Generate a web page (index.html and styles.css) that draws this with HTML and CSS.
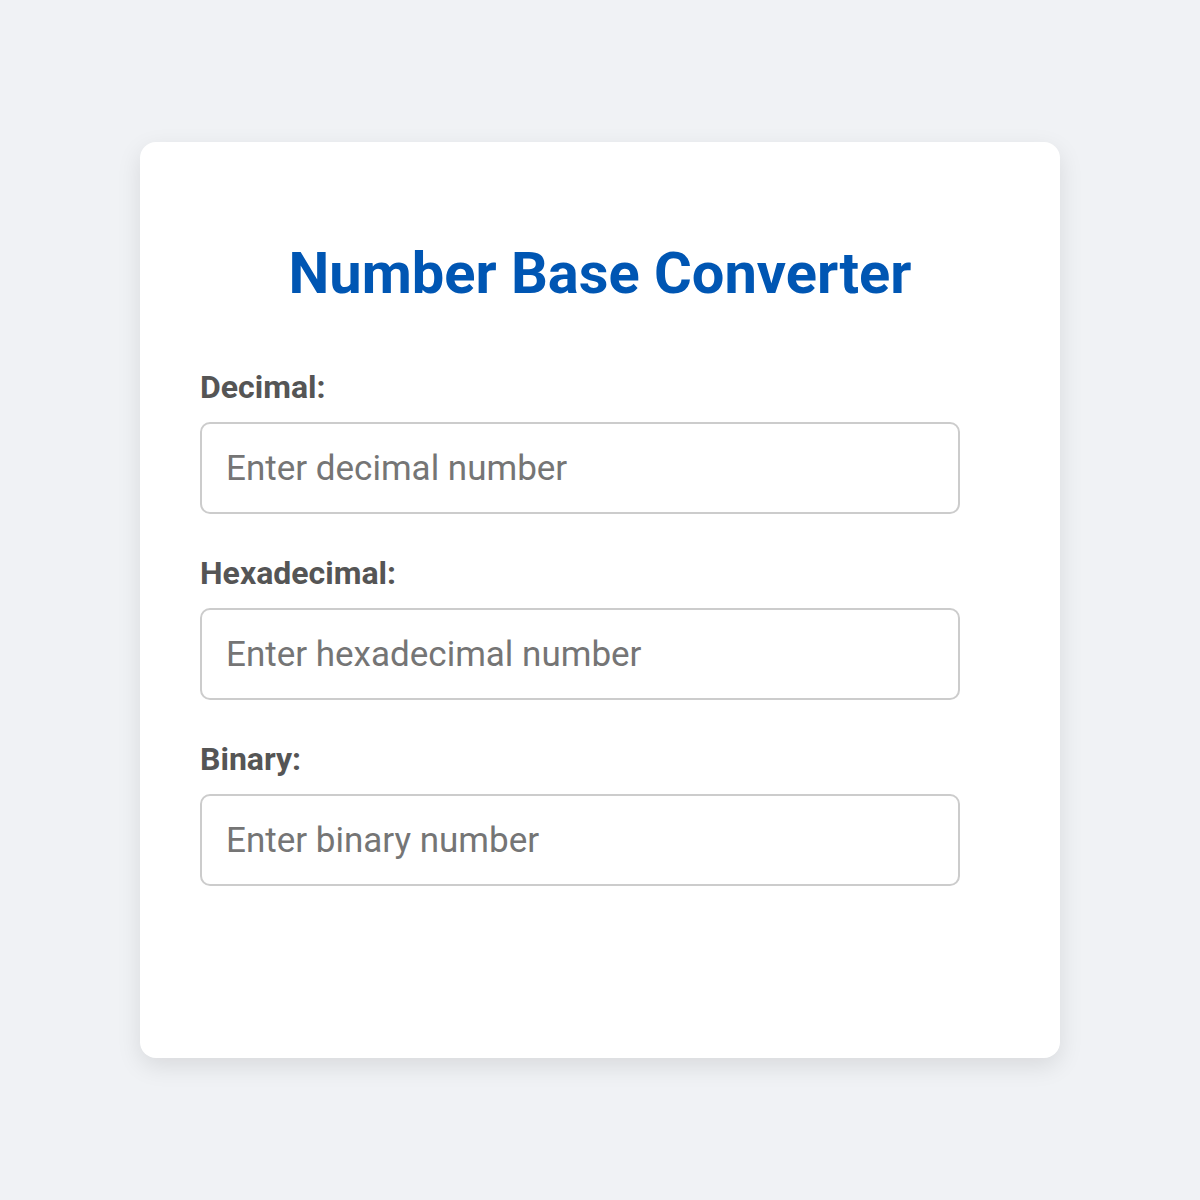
FILE: index.html
```html
<!DOCTYPE html>
<html lang="en">

<head>
    <meta charset="UTF-8">
    <meta name="viewport" content="width=device-width, initial-scale=1.0">
    <title>Number Base Converter</title>

    <link rel="stylesheet" href="styles.css">
</head>

<body>
    <div class="container">
        <h1>Number Base Converter</h1>

        <label for="decimal">Decimal:</label>
        <input type="text" id="decimal" placeholder="Enter decimal number">

        <label for="hex">Hexadecimal:</label>
        <input type="text" id="hex" placeholder="Enter hexadecimal number">

        <label for="binary">Binary:</label>
        <input type="text" id="binary" placeholder="Enter binary number">
    </div>
</body>

</html>
```

FILE: styles.css
```css
* {
    margin: 0;
    padding: 0;
    box-sizing: border-box;
}

body {
    font-family: Roboto, "Liberation Sans", sans-serif;
    background-color: #f0f2f5;
    min-height: 100vh;
    display: flex;
    justify-content: center;
    align-items: center;
}

.container {
    width: 920px;
    height: 916px;
    padding: 98px 60px 60px;
    background-color: #fff;
    border-radius: 16px;
    box-shadow: 0 8px 24px rgba(0, 0, 0, 0.1);
    display: flex;
    flex-direction: column;
}

h1 {
    font-size: 57.8px;
    line-height: 67px;
    font-weight: bold;
    color: #0056b3;
    text-align: center;
    margin-bottom: 62px;
}

label {
    font-size: 32px;
    line-height: 36px;
    font-weight: bold;
    color: #555;
    margin-bottom: 17px;
}

input {
    width: 760px;
    height: 92px;
    padding: 0 24px;
    font-family: inherit;
    font-size: 35px;
    color: #333;
    border: 2px solid #ccc;
    border-radius: 10px;
    outline: none;
    margin-bottom: 41px;
}

input::placeholder {
    color: #757575;
}
```
